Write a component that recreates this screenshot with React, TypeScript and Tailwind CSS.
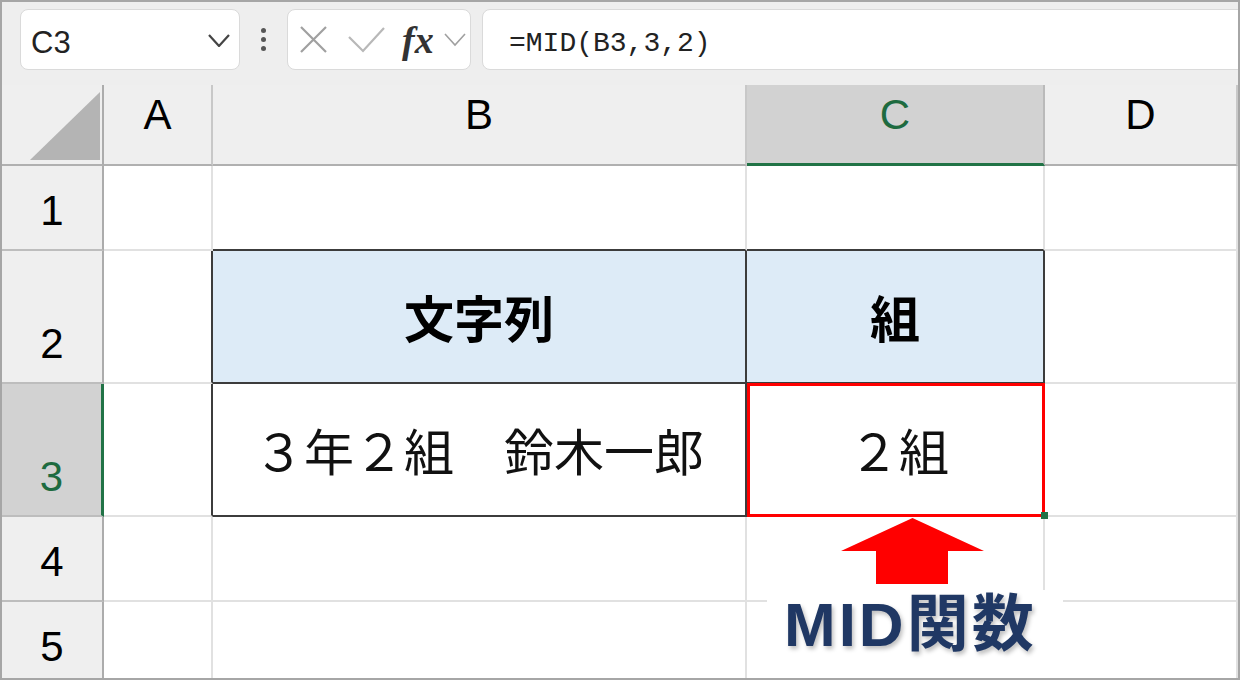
import React from 'react';

const sans = "font-['Liberation_Sans','Noto_Sans_CJK_JP',sans-serif]";
const jp = "font-['Noto_Sans_CJK_JP','Liberation_Sans',sans-serif]";

function ColHead({ label, active }: { label: string; active?: boolean }) {
  return (
    <div
      className={
        active
          ? `flex justify-center pt-[9px] bg-[#d2d2d2] border-r-2 border-r-[#bababa] border-b-[3px] border-b-[#217346] text-[#1e6b40] text-[42px] leading-none ${sans}`
          : `flex justify-center pt-[9px] bg-[#efefef] border-r-2 border-r-[#c8c8c8] border-b-2 border-b-[#b0b0b0] text-black text-[42px] leading-none ${sans}`
      }
    >
      {label}
    </div>
  );
}

function RowHead({ n, active }: { n: number; active?: boolean }) {
  return (
    <div
      className={
        active
          ? `flex items-end justify-center pb-[17px] bg-[#d2d2d2] border-r-[3px] border-r-[#217346] border-b-2 border-b-[#bdbdbd] text-[#1e6b40] text-[42px] leading-none ${sans}`
          : `flex items-end justify-center pb-[17px] bg-[#efefef] border-r-2 border-r-[#acacac] border-b-2 border-b-[#bdbdbd] text-black text-[42px] leading-none ${sans}`
      }
    >
      {n}
    </div>
  );
}

export default function App() {
  return (
    <div className="relative w-[1240px] h-[680px] overflow-hidden border-2 border-[#a6a6a6] bg-white">
      {/* formula bar */}
      <div className="h-[83px] flex items-start pt-[7px] pl-[18px] bg-[#eeeeee]">
        <div className="w-[220px] h-[61px] flex items-center justify-between pl-[10px] pr-[9px] bg-white border border-[#dadada] rounded-lg">
          <span className={`text-[31px] leading-none text-[#222] mt-[6px] ${sans}`}>C3</span>
          <svg width="22" height="13" viewBox="0 0 22 13" className="mt-[2px]">
            <polyline points="1,1 11,12 21,1" fill="none" stroke="#444" strokeWidth="2.2" />
          </svg>
        </div>
        <div className="w-[47px] h-[61px] flex flex-col items-center justify-center gap-[4px]">
          <span className="w-[5px] h-[5px] rounded-full bg-[#555]" />
          <span className="w-[5px] h-[5px] rounded-full bg-[#555]" />
          <span className="w-[5px] h-[5px] rounded-full bg-[#555]" />
        </div>
        <div className="w-[184px] h-[61px] flex items-center pl-[12px] bg-white border border-[#dadada] rounded-lg">
          <svg width="27" height="27" viewBox="0 0 27 27">
            <path d="M1 1 L26 26 M26 1 L1 26" stroke="#a0a0a0" strokeWidth="2.2" fill="none" />
          </svg>
          <svg width="37" height="26" viewBox="0 0 37 26" className="ml-[21px]">
            <polyline points="1,10 15,24 36,1" fill="none" stroke="#b8b8b8" strokeWidth="2.2" />
          </svg>
          <span className="ml-[17px] text-[38px] leading-none italic font-bold text-[#333] font-['Liberation_Serif',serif]">fx</span>
          <svg width="22" height="14" viewBox="0 0 22 14" className="ml-[10px]">
            <polyline points="1,1 11,12 21,1" fill="none" stroke="#a0a0a0" strokeWidth="1.6" />
          </svg>
        </div>
        <div className="flex-1 h-[61px] -mr-[12px] ml-[11px] flex items-center pl-[26px] pt-[8px] bg-white border border-[#dadada] rounded-lg">
          <span className="text-[28px] leading-none text-[#222] font-['Liberation_Mono',monospace]">=MID(B3,3,2)</span>
        </div>
      </div>

      {/* sheet */}
      <div className="grid grid-cols-[102px_109px_534px_298px_1fr] grid-rows-[81px_85px_133px_133px_85px_85px]">
        <div className="flex items-end justify-end pr-[2px] pb-[4px] bg-[#efefef] border-r-2 border-r-[#acacac] border-b-2 border-b-[#b0b0b0]">
          <svg width="70" height="68" viewBox="0 0 70 68">
            <polygon points="70,0 70,68 0,68" fill="#b4b4b4" />
          </svg>
        </div>
        <ColHead label="A" />
        <ColHead label="B" />
        <ColHead label="C" active />
        <ColHead label="D" />

        {/* row 1 */}
        <RowHead n={1} />
        <div className="border-r-2 border-b-2 border-[#e1e1e1]" />
        <div className="border-r-2 border-r-[#e1e1e1] border-b-2 border-b-[#3c3c3c]" />
        <div className="border-r-2 border-r-[#e1e1e1] border-b-2 border-b-[#3c3c3c]" />
        <div className="border-r-2 border-b-2 border-[#e1e1e1]" />

        {/* row 2 */}
        <RowHead n={2} />
        <div className="border-r-2 border-r-[#3c3c3c] border-b-2 border-b-[#e1e1e1]" />
        <div className={`flex items-center justify-center bg-[#ddebf7] border-r-2 border-b-2 border-[#3c3c3c] text-[50px] font-bold text-black ${jp}`}>
          文字列
        </div>
        <div className={`flex items-center justify-center bg-[#ddebf7] border-r-2 border-b-2 border-[#3c3c3c] text-[50px] font-bold text-black ${jp}`}>
          組
        </div>
        <div className="border-r-2 border-b-2 border-[#e1e1e1]" />

        {/* row 3 */}
        <RowHead n={3} active />
        <div className="border-r-2 border-r-[#3c3c3c] border-b-2 border-b-[#e1e1e1]" />
        <div className={`flex items-center justify-center border-r-2 border-b-2 border-[#3c3c3c] text-[50px] text-[#111] ${jp}`}>
          ３年２組　鈴木一郎
        </div>
        <div className={`relative flex items-center justify-center pl-[8px] border-r-2 border-b-2 border-[#3c3c3c] text-[50px] text-[#111] ${jp}`}>
          ２組
          <div className="absolute -top-[1px] left-0 -right-[2px] -bottom-[2px] border-[3px] border-[#ff0000]" />
        </div>
        <div className="border-r-2 border-b-2 border-[#e1e1e1]" />

        {/* row 4 */}
        <RowHead n={4} />
        <div className="border-r-2 border-b-2 border-[#e1e1e1]" />
        <div className="border-r-2 border-b-2 border-[#e1e1e1]" />
        <div className="border-r-2 border-b-2 border-[#e1e1e1]" />
        <div className="border-r-2 border-b-2 border-[#e1e1e1]" />

        {/* row 5 */}
        <RowHead n={5} />
        <div className="border-r-2 border-b-2 border-[#e1e1e1]" />
        <div className="border-r-2 border-b-2 border-[#e1e1e1]" />
        <div className="border-r-2 border-b-2 border-[#e1e1e1]" />
        <div className="border-r-2 border-b-2 border-[#e1e1e1]" />
      </div>

      {/* fill handle */}
      <div className="absolute left-[1039px] top-[510px] w-[7px] h-[7px] bg-[#217346]" />

      {/* arrow */}
      <svg className="absolute left-[839px] top-[516px]" width="143" height="66" viewBox="0 0 143 66">
        <polygon points="71.5,0 143,33 107,33 107,66 35,66 35,33 0,33" fill="#ff0000" />
      </svg>

      {/* label */}
      <div className="absolute left-[765px] top-[588px] w-[296px] h-[100px] bg-white pl-[17px] pt-[4px]">
        <span className={`text-[62px] leading-none font-bold tracking-[3px] text-[#203864] [text-shadow:2px_3px_4px_rgba(0,0,0,0.25)] ${sans}`}>
          MID関数
        </span>
      </div>
    </div>
  );
}
